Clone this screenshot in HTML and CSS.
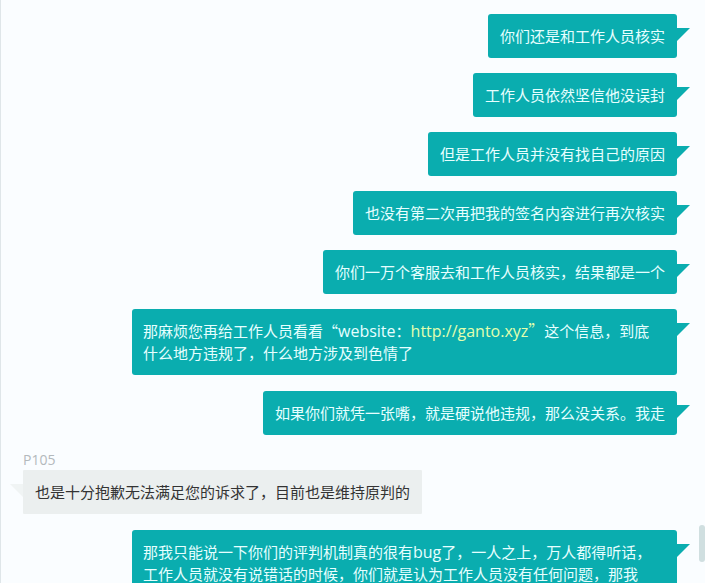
FILE: index.html
```html
<!DOCTYPE html>
<html lang="zh-CN">
<head>
<meta charset="utf-8">
<title>在线客服</title>
<link rel="stylesheet" href="styles.css">
</head>
<body>
<main class="chat">
  <section class="message sent"><p class="bubble">你们还是和工作人员核实</p></section>
  <section class="message sent"><p class="bubble">工作人员依然坚信他没误封</p></section>
  <section class="message sent"><p class="bubble">但是工作人员并没有找自己的原因</p></section>
  <section class="message sent"><p class="bubble">也没有第二次再把我的签名内容进行再次核实</p></section>
  <section class="message sent"><p class="bubble">你们一万个客服去和工作人员核实，结果都是一个</p></section>
  <section class="message sent long"><p class="bubble">那麻烦您再给工作人员看看<span class="quote">“</span><span class="latin">website</span>：<a class="link latin" href="http://ganto.xyz">http://ganto.xyz<span class="quote">”</span></a>这个信息，到底<br>什么地方违规了，什么地方涉及到色情了</p></section>
  <section class="message sent"><p class="bubble">如果你们就凭一张嘴，就是硬说他违规，那么没关系。我走</p></section>
  <section class="message received">
    <h2 class="sender">P105</h2>
    <p class="bubble">也是十分抱歉无法满足您的诉求了，目前也是维持原判的</p>
  </section>
  <section class="message sent long"><p class="bubble">那我只能说一下你们的评判机制真的很有<span class="latin">bug</span>了，一人之上，万人都得听话，<br>工作人员就没有说错话的时候，你们就是认为工作人员没有任何问题，那我</p></section>
  <div class="thumb"></div>
</main>
</body>
</html>
```
FILE: styles.css
```css
* {
  box-sizing: border-box;
}

body {
  margin: 0;
  background: #fafdff;
  color: #333;
  font: 15px/22px "Open Sans", "Noto Sans CJK SC", sans-serif;
}

.chat {
  position: relative;
  display: flex;
  flex-direction: column;
  height: 100vh;
  padding: 14px 28px 0 22px;
  border-left: 1px solid #dfe6e9;
  overflow: hidden;
}

.message {
  display: flex;
  flex-direction: column;
  flex-shrink: 0;
  align-items: flex-start;
  margin-bottom: 15px;
}

.sent {
  align-items: flex-end;
}

.long,
.received {
  margin-bottom: 16px;
}

.bubble {
  position: relative;
  margin: 0;
  padding: 11px 12px;
  border-radius: 1px;
  background: #ebefef;
}

.sent .bubble {
  border-radius: 3px;
  background: #0aadaf;
  color: #e6ffff;
}

.long .bubble {
  width: calc(100% * 5 / 6);
  padding: 11px;
}

.bubble::after {
  content: "";
  position: absolute;
  top: 14px;
  right: 100%;
  width: 13px;
  height: 13px;
  background: #f0f4f4;
  clip-path: polygon(0 0, 100% 0, 100% 100%);
}

.sent .bubble::after {
  right: auto;
  left: 100%;
  background: #0aadaf;
  clip-path: polygon(0 0, 100% 0, 0 100%);
}

.latin {
  font-size: 16px;
}

.link {
  color: #e3ffae;
  text-decoration: none;
}

.quote {
  font-family: "Noto Sans CJK SC", sans-serif;
  line-height: 1;
}

.sender {
  margin: 0;
  color: #b3b9bc;
  font-size: 14px;
  font-weight: 400;
  line-height: 20px;
}

.thumb {
  position: absolute;
  right: 0;
  bottom: 21px;
  width: 6px;
  height: 37px;
  border-radius: 3px;
  background: #d0dfe0;
}
```
